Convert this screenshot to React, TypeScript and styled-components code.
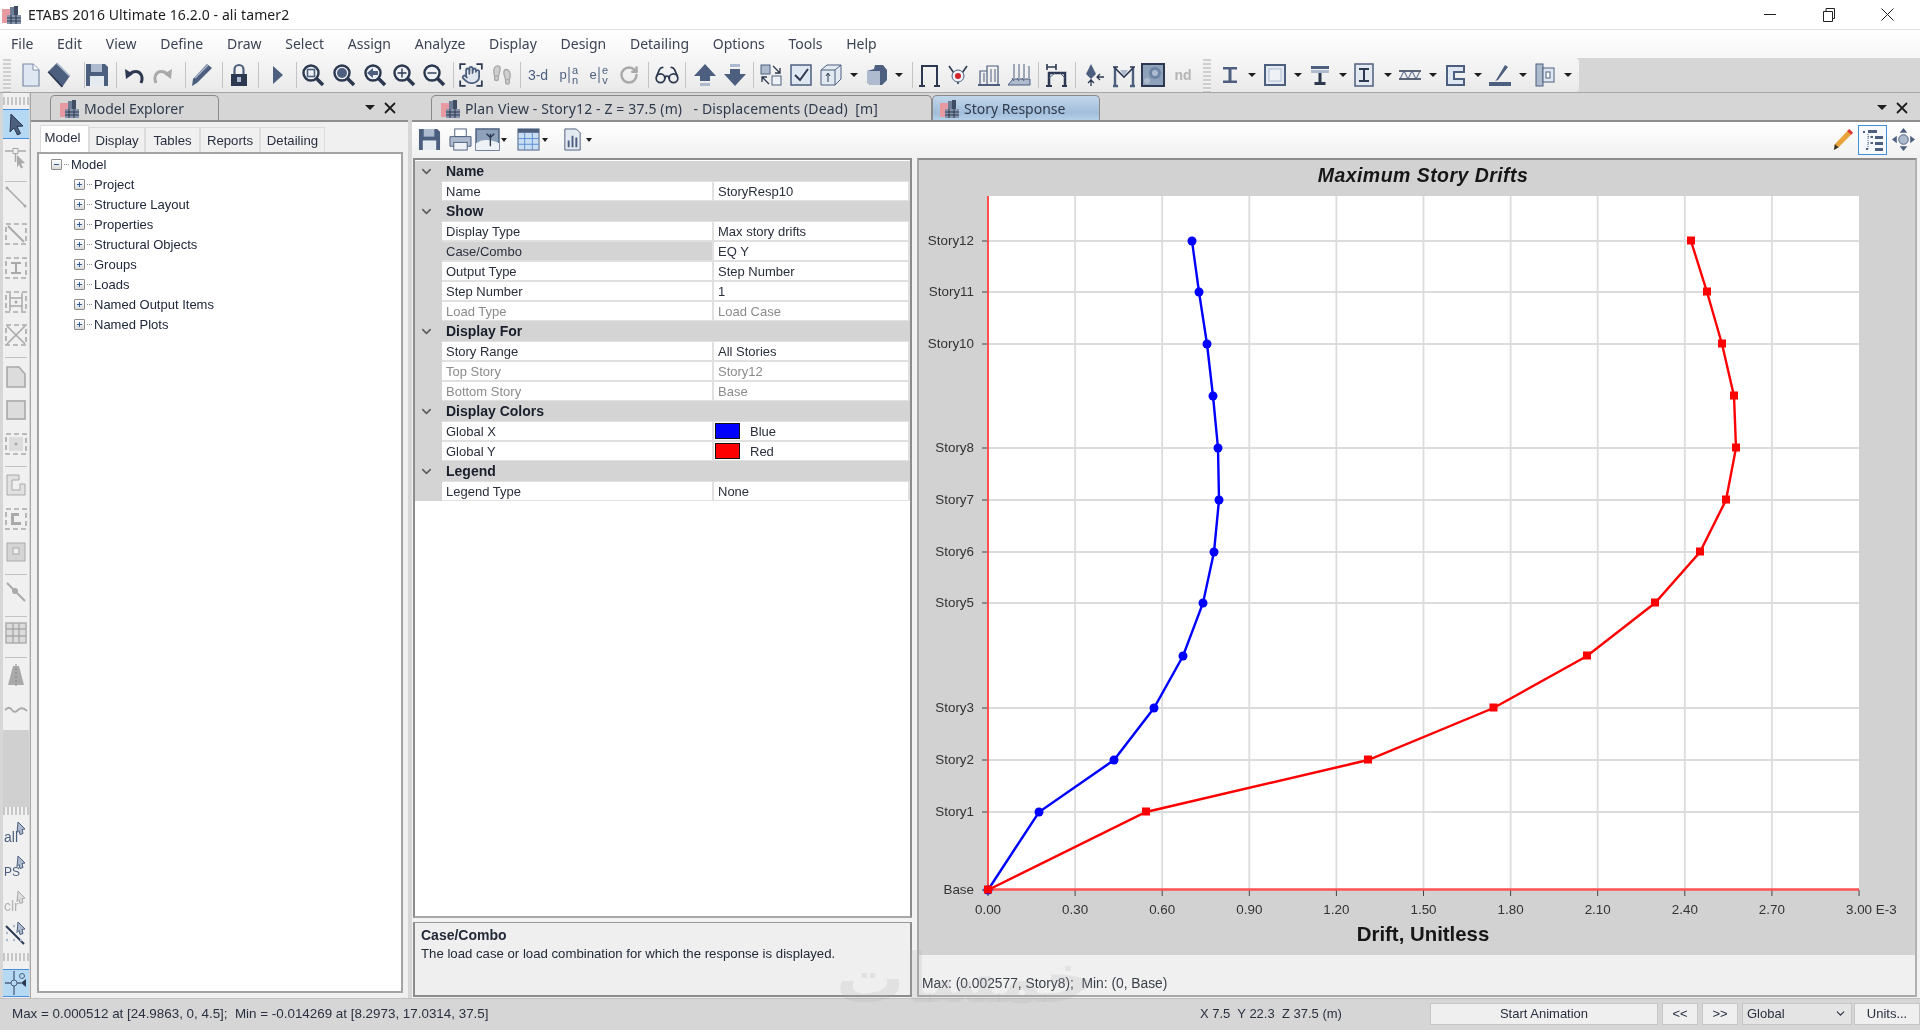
import React from "react"
import styled, { createGlobalStyle } from "styled-components"
import { ChevronDown, Footprints, Glasses, Hand, RotateCw } from "lucide-react"

const S = "#4d5f7f"
const D = "#2c3850"
const L = "#aebbcf"
const G = "#a9a9a9"
const GL = "#cfcfcf"

const GlobalStyle = createGlobalStyle`
	html, body {
		margin: 0;
		padding: 0;
		background: #d6d6d6;
	}
	* {
		box-sizing: border-box;
	}
`

// ---- toolbar / rail glyphs, all in a 24 box ----

const zoomRing = (inner: React.ReactNode) => (
	<>
		<circle cx="10" cy="10" r="7.5" fill="#eef2f7" stroke={D} strokeWidth="2.4" />
		<path d="M15.5 15.5 22 22" stroke={D} strokeWidth="3.6" />
		{inner}
	</>
)

const dashed = (inner: React.ReactNode) => (
	<>
		<rect x="2" y="2" width="20" height="20" fill="none" stroke={G} strokeWidth="1.6" strokeDasharray="5 3" />
		{inner}
	</>
)

const GLYPHS: Record<string, React.ReactNode> = {
	doc: <><path d="M5 1h10l6 6v16H5z" fill="#dfe7f2" stroke="#7d8ca6" strokeWidth="1.2" /><path d="M15 1v6h6" fill="#fff" stroke="#7d8ca6" /></>,
	book: <><path d="M2 9 10 1l12 12-7 10z" fill={S} /><path d="M10 1l12 12" stroke={L} strokeWidth="1.5" /><path d="M2 9l13 14" stroke={D} strokeWidth="1.5" /></>,
	save: <><path d="M1 1h19l3 3v19H1z" fill={S} /><rect x="6" y="1" width="11" height="8" fill={L} /><rect x="5" y="13" width="14" height="10" fill="#e6ebf2" /></>,
	undo: <><path d="M19 20c3-7-1-13-8-11l-4 2" fill="none" stroke={D} strokeWidth="3" /><path d="M3 6l1 10 7-5z" fill={D} /></>,
	redo: <><path d="M5 20C2 13 6 7 13 9l4 2" fill="none" stroke={G} strokeWidth="3" /><path d="M21 6l-1 10-7-5z" fill={G} /></>,
	pencil: <><path d="M3 23l1-7L18 1l5 4L8 20z" fill={S} /><path d="M6 15 19 2" stroke={L} strokeWidth="1.4" /></>,
	lock: <><rect x="4" y="11" width="16" height="12" fill={D} /><rect x="10" y="14" width="4" height="5" fill={L} /><path d="M7.5 11V6.5a4.5 4.5 0 0 1 9 0V11" fill="none" stroke={S} strokeWidth="2.2" /></>,
	play: <path d="M8 3l10 9-10 9z" fill={S} />,
	zoomBox: zoomRing(<rect x="6.5" y="6.5" width="7" height="7" fill="none" stroke={S} strokeWidth="1.6" />),
	zoomFull: zoomRing(<circle cx="10" cy="10" r="5" fill={S} />),
	zoomBack: zoomRing(<path d="M4 10l6-5v3h5v4h-5v3z" fill={S} />),
	zoomIn: zoomRing(<path d="M10 5.5v9M5.5 10h9" stroke={D} strokeWidth="1.4" />),
	zoomOut: zoomRing(<path d="M5.5 10h9" stroke={D} strokeWidth="1.4" />),
	hand: <><path d="M2 7V2h5M17 2h5v5M22 17v5h-5M7 22H2v-5" fill="none" stroke={D} strokeWidth="1.6" /><Hand x="3" y="3" width="18" height="18" color={S} fill="#dfe5ee" strokeWidth="2.2" /></>,
	foot: <Footprints x="1" y="1" width="22" height="22" color={G} fill={GL} strokeWidth="1.5" />,
	threeD: <text x="12" y="17" textAnchor="middle" fontSize="14" fill={S} fontFamily="'Liberation Sans', sans-serif">3-d</text>,
	plan: <><text x="6" y="16" textAnchor="middle" fontSize="13" fill={S} fontFamily="'Liberation Sans', sans-serif">p</text><path d="M12 4v16" stroke={S} /><text x="18" y="11" textAnchor="middle" fontSize="11" fill={S} fontFamily="'Liberation Sans', sans-serif">a</text><text x="18" y="21" textAnchor="middle" fontSize="11" fill={S} fontFamily="'Liberation Sans', sans-serif">n</text></>,
	elev: <><text x="6" y="16" textAnchor="middle" fontSize="13" fill={S} fontFamily="'Liberation Sans', sans-serif">e</text><path d="M12 4v16" stroke={S} /><text x="18" y="11" textAnchor="middle" fontSize="11" fill={S} fontFamily="'Liberation Sans', sans-serif">e</text><text x="18" y="21" textAnchor="middle" fontSize="11" fill={S} fontFamily="'Liberation Sans', sans-serif">v</text></>,
	rotate: <RotateCw x="2" y="2" width="20" height="20" color={G} strokeWidth="3" />,
	glasses: <Glasses x="0" y="0" width="24" height="24" color={D} strokeWidth="1.6" />,
	up: <><path d="M12 1 23 13h-6v5H7v-5H1z" fill={S} /><rect x="7" y="20" width="10" height="3" fill={L} /></>,
	down: <><rect x="7" y="1" width="10" height="3" fill={L} /><path d="M7 6h10v5h6L12 23 1 11h6z" fill={S} /></>,
	replicate: <><rect x="2" y="2" width="9" height="9" fill={L} stroke={S} /><rect x="13" y="13" width="9" height="9" fill="#eef2f7" stroke={S} /><path d="M14 3l7 7M21 5v5h-5M3 14l7 7M3 19v-5h5" fill="none" stroke={D} strokeWidth="1.3" /></>,
	check: <><rect x="2" y="2" width="20" height="20" fill="#dfe7f2" stroke={S} strokeWidth="1.5" /><path d="M6 12l5 5 8-11" fill="none" stroke={D} strokeWidth="2" /></>,
	box: <><path d="M2 7l6-5h14v14l-6 6H2z" fill="#e3e9f1" stroke={S} /><path d="M2 7h14v15M16 7l6-5" fill="none" stroke={S} /><path d="M9 19v-8M7 13l2-3 2 3" fill="none" stroke={D} /></>,
	shape: <><path d="M2 8l7-2 1-4h8l4 5v10l-5 5H5l-3-3z" fill={S} /><path d="M2 8h13v14H5l-3-3z" fill={L} /></>,
	frame: <path d="M5 23V3h15v20M2 23h6M17 23h6" fill="none" stroke={D} strokeWidth="2" />,
	node: <><path d="M3 3l7 10M21 3l-7 10M12 21v-3" fill="none" stroke={D} strokeWidth="1.6" /><circle cx="12" cy="13" r="6" fill="#eef2f7" stroke={S} /><circle cx="12" cy="13" r="3" fill="#d2232a" /></>,
	loadA: <><path d="M3 22V8h7v14M10 22V3h11v19" fill="none" stroke={S} strokeWidth="1.2" /><path d="M7 10v9M14 6v13M18 6v13" stroke={S} /><path d="M1 22h22" stroke={S} strokeWidth="2" /></>,
	loadB: <><path d="M7 1v14M12 1v14M17 1v14M22 3v12" stroke={S} /><path d="M1 22l5-6h17v6zM5 15l2 3M10 15l2 3M15 15l2 3" fill={L} stroke={S} /></>,
	portal: <><path d="M3 1v6M12 1v6M3 4h9" stroke={D} strokeWidth="1.6" /><path d="M5 23V10h16v13" fill="none" stroke={D} strokeWidth="2.5" /><path d="M2 23h6M18 23h5" stroke={D} strokeWidth="2" /><path d="M5 15l6-5M21 15l-5-5" stroke={S} /></>,
	cone: <><path d="M10 1l5 10-5 5-5-5z" fill={S} /><path d="M10 16v7M7 20l3-3 3 3M23 14h-7M19 11l-3 3 3 3" fill="none" stroke={D} strokeWidth="1.3" /></>,
	arch: <><path d="M3 4v19M21 4v19M1 23h5M18 23h5" stroke={S} strokeWidth="2.4" /><path d="M3 5l9 9 9-9M1 4h5M18 4h5" fill="none" stroke={D} strokeWidth="1.6" /><path d="M8 7h8l-4 6z" fill={L} /></>,
	contour: <><rect x="1" y="1" width="22" height="22" fill="#8ea1bb" stroke={D} strokeWidth="2" /><circle cx="14" cy="10" r="6" fill="#6d83a3" /><circle cx="14" cy="10" r="3" fill="#aebbcf" /><circle cx="6" cy="18" r="3" fill="#aebbcf" /></>,
	nd: <text x="12" y="17" textAnchor="middle" fontSize="14" fontWeight="700" fill="#b5b5b5" fontFamily="'Liberation Sans', sans-serif">nd</text>,
	ibeam: <path d="M5 4h14v2.5h-5.5v11H19V20H5v-2.500h5.500v-11H5z" fill={S} />,
	rectSec: <><rect x="2" y="2" width="20" height="20" fill="#e3e9f1" stroke={S} strokeWidth="2" /><rect x="6" y="6" width="12" height="12" fill="#eef2f7" stroke={L} /></>,
	tsec: <><rect x="3" y="3" width="18" height="3" fill={S} /><rect x="3" y="7" width="18" height="3" fill={L} /><path d="M10.500 10h3v9h4v3h-11v-3h4z" fill={D} /></>,
	iboxed: <><rect x="3" y="1" width="18" height="22" fill="#e3e9f1" stroke={S} strokeWidth="1.5" /><path d="M7 5h10v2h-4v10h4v2H7v-2h4V7H7z" fill={D} /></>,
	truss: <><path d="M1 8h22M1 16h22" stroke={D} strokeWidth="1.6" /><path d="M2 16l4-8 4 8 4-8 4 8 4-8" fill="none" stroke={S} /></>,
	csec: <path d="M4 3h17v6h-10v7h10v6H4z" fill="#dfe7f2" stroke={S} strokeWidth="2" />,
	weld: <><path d="M8 17 17 2l3 2-10 13-3 1z" fill={S} /><rect x="1" y="19" width="22" height="4" fill={S} /></>,
	column: <><rect x="3" y="1" width="7" height="22" fill={L} stroke={S} /><rect x="10" y="5" width="11" height="14" fill="#dfe7f2" stroke={S} /><rect x="13" y="9" width="4" height="6" fill="#fff" stroke={S} /></>,
	arrow: <path d="M7 2l12 12-6 .5 3.500 7-3 1.500-3.500-7L6 20z" fill={S} stroke={D} />,
	nodePick: <><path d="M1 5h8M14 5h8M11.500 8v8" stroke={G} strokeWidth="1.5" /><rect x="9" y="2.500" width="5" height="5" fill="none" stroke={G} /><path d="M13 9l8 8-4 .5 2 4-2 1-2-4-2 3z" fill={G} /></>,
	line: <><path d="M3 3l18 18" stroke={G} strokeWidth="1.6" /><circle cx="3" cy="3" r="1.500" fill={G} /><circle cx="21" cy="21" r="1.500" fill={G} /></>,
	dashLine: dashed(<path d="M4 4l16 16" stroke={G} strokeWidth="2" />),
	dashI: dashed(<path d="M7 6h10v2h-4v8h4v2H7v-2h4V8H7z" fill={G} />),
	dashGrid: dashed(<><path d="M6 3v18M18 3v18M6 8h12M6 16h12" stroke={G} strokeWidth="1.5" /><circle cx="12" cy="12" r="1.500" fill={G} /></>),
	dashX: dashed(<path d="M3 3l18 18M21 3 3 21" stroke={G} strokeWidth="1.6" />),
	poly: <path d="M3 2h12l6 7v13H3z" fill="#dcdcdc" stroke={G} strokeWidth="1.600" />,
	rect: <rect x="3" y="3" width="18" height="18" fill="#dcdcdc" stroke={G} strokeWidth="1.600" />,
	dashRect: dashed(<><rect x="5" y="5" width="14" height="14" fill="#dcdcdc" /><circle cx="12" cy="12" r="1.500" fill={G} /></>),
	lsec: <path d="M3 2h12v5H8v10h8v-6h5v11H3z" fill="#e0e0e0" stroke={G} />,
	dashL: dashed(<path d="M7 6h8v3h-5v6h7v3H7z" fill={G} />),
	squareDot: <><rect x="3" y="3" width="18" height="18" fill="#d4d4d4" stroke={G} /><rect x="9" y="8" width="6" height="6" fill="#eee" stroke={G} /></>,
	pin: <><path d="M3 3l18 18" stroke={G} strokeWidth="2" /><circle cx="11" cy="11" r="3" fill={G} /></>,
	grid: <><rect x="2" y="2" width="20" height="20" fill="#dcdcdc" stroke={G} strokeWidth="1.400" /><path d="M9 2v20M15 2v20M2 8h20M2 15h20" stroke={G} strokeWidth="1.400" /></>,
	trapezoid: <><path d="M9 3h6l5 19H4z" fill={G} /><path d="M12 1v22" stroke="#888" strokeDasharray="2 2" /></>,
	wave: <path d="M1 12c3-3 5-3 7 0s4 2 6 0 5-3 9 1" fill="none" stroke={G} strokeWidth="1.800" />,
	allPick: <><text x="0" y="21" fontSize="14" fill={S} fontFamily="'Liberation Sans', sans-serif">all</text><path d="M14 1l7 7-3 .5 1 4-3 1-1-4-2 2z" fill={L} stroke={S} /></>,
	psPick: <><text x="0" y="21" fontSize="12" fill={S} fontFamily="'Liberation Sans', sans-serif">PS</text><path d="M14 1l7 7-3 .5 1 4-3 1-1-4-2 2z" fill={L} stroke={S} /></>,
	clrPick: <><text x="0" y="21" fontSize="14" fill="#b3b3b3" fontFamily="'Liberation Sans', sans-serif">clr</text><path d="M14 1l7 7-3 .5 1 4-3 1-1-4-2 2z" fill="#ddd" stroke={G} /></>,
	slashPick: <><path d="M2 5l18 18" stroke={D} strokeWidth="2" /><path d="M2 12h2M2 19h2M9 19h2M16 19h2M9 5h2" stroke={L} strokeWidth="2.500" /><path d="M14 1l7 7-3 .5 1 4-3 1-1-4-2 2z" fill={L} stroke={S} /></>,
	nodeTool: <><path d="M10 0v9M10 15v9M1 12h6M13 12h4" stroke={S} strokeWidth="1.300" /><circle cx="10" cy="12" r="3" fill="none" stroke={S} /><circle cx="18" cy="5" r="2.500" fill="none" stroke={S} /><path d="M22 8v8l-5-4z" fill={D} /></>,
}

type Tool = { n: string; c: number; s?: number; h?: number; on?: boolean }

const TOP_TOOLS: Tool[] = [
	{ n: "grip", c: 7 }, { n: "doc", c: 30 }, { n: "book", c: 59, s: 26 }, { n: "sep", c: 84 }, { n: "save", c: 97 },
	{ n: "sep", c: 116 }, { n: "undo", c: 134 }, { n: "redo", c: 163 }, { n: "sep", c: 185 }, { n: "pencil", c: 201 },
	{ n: "sep", c: 222 }, { n: "lock", c: 239 }, { n: "sep", c: 258 }, { n: "play", c: 277 }, { n: "sep", c: 296 },
	{ n: "zoomBox", c: 313 }, { n: "zoomFull", c: 344 }, { n: "zoomBack", c: 375 }, { n: "zoomIn", c: 404 }, { n: "zoomOut", c: 434 },
	{ n: "sep", c: 453 }, { n: "hand", c: 471, s: 26 }, { n: "foot", c: 502 }, { n: "sep", c: 520 }, { n: "threeD", c: 538 },
	{ n: "plan", c: 569 }, { n: "elev", c: 599 }, { n: "rotate", c: 629 }, { n: "sep", c: 648 }, { n: "glasses", c: 667, s: 26 },
	{ n: "sep", c: 685 }, { n: "up", c: 704.5 }, { n: "down", c: 735 }, { n: "sep", c: 753 }, { n: "replicate", c: 771 },
	{ n: "check", c: 801 }, { n: "box", c: 831 }, { n: "caret", c: 854 }, { n: "shape", c: 877 }, { n: "caret", c: 899 },
	{ n: "sep", c: 912 }, { n: "frame", c: 929 }, { n: "node", c: 958 }, { n: "loadA", c: 989 }, { n: "loadB", c: 1019 },
	{ n: "sep", c: 1038 }, { n: "portal", c: 1056 }, { n: "sep", c: 1075 }, { n: "cone", c: 1093 }, { n: "arch", c: 1124 },
	{ n: "contour", c: 1153 }, { n: "nd", c: 1183 }, { n: "grip", c: 1207 }, { n: "ibeam", c: 1230 }, { n: "caret", c: 1252 },
	{ n: "rectSec", c: 1275 }, { n: "caret", c: 1298 }, { n: "tsec", c: 1320 }, { n: "caret", c: 1343 }, { n: "iboxed", c: 1364 },
	{ n: "caret", c: 1388 }, { n: "truss", c: 1410 }, { n: "caret", c: 1433 }, { n: "csec", c: 1455 }, { n: "caret", c: 1478 },
	{ n: "weld", c: 1500 }, { n: "caret", c: 1523 }, { n: "column", c: 1545 }, { n: "caret", c: 1568 },
]

// rail offsets are measured from the top of the main area
const RAIL_A: Tool[] = [
	{ n: "arrow", c: 31, s: 30, on: true }, { n: "nodePick", c: 65 }, { n: "railSep", c: 88 }, { n: "line", c: 104 },
	{ n: "dashLine", c: 141 }, { n: "dashI", c: 175 }, { n: "dashGrid", c: 209 }, { n: "dashX", c: 242 },
	{ n: "railSep", c: 264 }, { n: "poly", c: 284 }, { n: "rect", c: 317 }, { n: "dashRect", c: 351 }, { n: "railSep", c: 373 },
	{ n: "lsec", c: 392 }, { n: "dashL", c: 426 }, { n: "squareDot", c: 459 }, { n: "railSep", c: 481 }, { n: "pin", c: 499 },
	{ n: "railSep", c: 523 }, { n: "grid", c: 540 }, { n: "railSep", c: 564 }, { n: "trapezoid", c: 582 }, { n: "wave", c: 617 },
]

const RAIL_B: Tool[] = [
	{ n: "allPick", c: 26 }, { n: "psPick", c: 60 }, { n: "clrPick", c: 95 }, { n: "slashPick", c: 126 },
	{ n: "railGrip", c: 150 }, { n: "nodeTool", c: 176, s: 28, on: true },
]

const withGaps = (items: Tool[], start: number) => {
	let end = start
	return items.map((t) => {
		const s = t.n === "sep" || t.n === "railSep" ? 1 : t.n === "caret" ? 8 : t.n === "grip" ? 8 : t.n === "railGrip" ? 8 : (t.s ?? 24)
		const gap = t.c - s / 2 - end
		end = t.c + s / 2
		return { ...t, s, gap }
	})
}

// ---- page ----

const Page = styled.div`
	position: relative;
	width: 1920px;
	height: 1030px;
	overflow: hidden;
	display: flex;
	flex-direction: column;
	background: #d6d6d6;
	font-family: "Liberation Sans", Arial, sans-serif;
	font-size: 13px;
	color: #26262e;
	filter: blur(0.35px);
`

const TitleBar = styled.header`
	height: 30px;
	flex: none;
	display: flex;
	align-items: center;
	background: #fff;
	border-bottom: 1px solid #e0e0e0;
	padding: 0 3px 0 2px;
	font-family: "Noto Sans", sans-serif;
	font-size: 14px;
	color: #1c1c1c;
`

const TitleText = styled.span`
	margin-left: 6px;
	flex: 1;
	padding-bottom: 1px;
	letter-spacing: 0.1px;
`

const WinButton = styled.div`
	width: 59px;
	height: 29px;
	display: flex;
	align-items: center;
	justify-content: center;
`

const Menu = styled.nav`
	height: 28px;
	flex: none;
	display: flex;
	align-items: center;
	gap: 23.7px;
	padding: 0 0 2px 11px;
	background: linear-gradient(#ffffff, #f6f6f6);
	font-family: "Noto Sans", sans-serif;
	font-size: 14px;
	color: #3c4454;
`

const ToolRow = styled.div`
	height: 35px;
	flex: none;
	background: #d6d6d6;
	border-bottom: 1px solid #a6a6a6;
	display: flex;
`

const ToolBand = styled.div`
	width: 1579px;
	display: flex;
	align-items: center;
	background: linear-gradient(#f6f6f6, #efefef 60%, #e9e9e9);
	border-radius: 0 4px 4px 0;
`

const ToolSlot = styled.svg<{ $w: number; $gap: number }>`
	flex: none;
	width: ${(p) => p.$w}px;
	height: ${(p) => p.$w}px;
	margin-left: ${(p) => p.$gap}px;
	overflow: visible;
`

const Sep = styled.i<{ $gap: number }>`
	flex: none;
	width: 1px;
	height: 26px;
	margin-left: ${(p) => p.$gap}px;
	background: #c4c4c4;
`

const Caret = styled.i<{ $gap: number }>`
	flex: none;
	margin-left: ${(p) => p.$gap}px;
	border-left: 4px solid transparent;
	border-right: 4px solid transparent;
	border-top: 4px solid #1e1e1e;
`

const Grip = styled.i<{ $gap: number }>`
	flex: none;
	width: 8px;
	height: 33px;
	margin-left: ${(p) => p.$gap}px;
	background: repeating-linear-gradient(#c6c6c6 0 2px, #f0f0f0 2px 4px);
	opacity: 0.8;
`

const Main = styled.div`
	flex: 1;
	min-height: 0;
	display: flex;
`

const Rail = styled.aside`
	width: 31px;
	flex: none;
	display: flex;
	flex-direction: column;
	padding-left: 3px;
	border-right: 1px solid #a8a8a8;
	background: #d6d6d6;
`

const RailBlock = styled.div<{ $h: number }>`
	flex: none;
	width: 26px;
	height: ${(p) => p.$h}px;
	display: flex;
	flex-direction: column;
	align-items: center;
	background: #f0f0f0;
`

const RailGap = styled.div`
	flex: 1;
	width: 26px;
	background: #d0d0d0;
`

const RailSlot = styled.div<{ $h: number; $gap: number; $on?: boolean }>`
	flex: none;
	width: 26px;
	height: ${(p) => p.$h}px;
	margin-top: ${(p) => p.$gap}px;
	display: flex;
	align-items: center;
	justify-content: center;
	background: ${(p) => (p.$on ? "#b5d8f3" : "transparent")};
	border-top: ${(p) => (p.$on ? "1px solid #4a90d9" : "none")};
	border-bottom: ${(p) => (p.$on ? "1px solid #4a90d9" : "none")};

	svg {
		width: 24px;
		height: 24px;
		overflow: visible;
	}
`

const RailSep = styled.i<{ $gap: number }>`
	flex: none;
	width: 22px;
	height: 1px;
	margin-top: ${(p) => p.$gap}px;
	background: #c2c2c2;
`

const RailGrip = styled.i<{ $gap: number }>`
	flex: none;
	width: 26px;
	height: 8px;
	margin-top: ${(p) => p.$gap}px;
	background: repeating-linear-gradient(90deg, #c6c6c6 0 2px, #f2f2f2 2px 4px);
`

const LeftDock = styled.section`
	width: 377px;
	flex: none;
	display: flex;
	flex-direction: column;
	background: #f0f0f0;
`

const Strip = styled.div`
	height: 29px;
	flex: none;
	display: flex;
	align-items: flex-end;
	background: #d6d6d6;
	border-bottom: 2px solid #8e8e8e;
	font-family: "Noto Sans", sans-serif;
	font-size: 14px;
	color: #2f3a4c;
`

const ExplorerStrip = styled(Strip)`
	padding-left: 19px;
`

const DocTab = styled.div<{ $w: number; $active?: boolean }>`
	width: ${(p) => p.$w}px;
	height: 25px;
	flex: none;
	display: flex;
	align-items: center;
	gap: 4px;
	padding: 1px 0 0 ${(p) => (p.$active ? 7 : 9)}px;
	white-space: pre;
	border: 1px solid #8a8a8a;
	border-bottom: none;
	border-radius: 5px 5px 0 0;
	background: ${(p) => (p.$active ? "linear-gradient(#c2d6ea, #a2bedb 70%, #b6cfe8)" : "#d6d6d6")};
`

const WideTabText = styled.span`
	letter-spacing: 0.13px;
`

const StripSpacer = styled.div`
	flex: 1;
`

const StripCaret = styled.i`
	align-self: center;
	border-left: 5px solid transparent;
	border-right: 5px solid transparent;
	border-top: 5px solid #1e1e1e;
	margin-right: 9px;
	margin-top: 2px;
`

const StripClose = styled.svg`
	align-self: center;
	width: 12px;
	height: 12px;
	margin-right: 12px;
	margin-top: 2px;
`

const SubTabs = styled.div`
	height: 30px;
	flex: none;
	display: flex;
	align-items: flex-end;
	padding-left: 9px;
`

const SubTab = styled.div<{ $w: number; $active?: boolean }>`
	width: ${(p) => p.$w}px;
	height: ${(p) => (p.$active ? 27 : 25)}px;
	flex: none;
	display: flex;
	align-items: center;
	justify-content: center;
	padding: 0 ${(p) => (p.$active ? 4 : 0)}px ${(p) => (p.$active ? 4 : 0)}px 0;
	background: ${(p) => (p.$active ? "#fff" : "#f0f0f0")};
	border: 1px solid #dcdcdc;
	border-bottom: none;
	font-size: 13.2px;
	color: #2a3040;
`

const TreeBox = styled.div`
	height: 841px;
	margin: 0 5px 0 6px;
	flex: none;
	background: #fff;
	border: 2px solid #a4a4a4;
`

const TreeRow = styled.div<{ $child?: boolean }>`
	height: 20px;
	display: flex;
	align-items: center;
	padding-left: ${(p) => (p.$child ? 35 : 12)}px;
	font-size: 13px;
	color: #20283a;
`

const Expander = styled.span<{ $open?: boolean }>`
	position: relative;
	width: 11px;
	height: 11px;
	flex: none;
	border: 1px solid #8f8f8f;
	border-radius: 1px;
	background: linear-gradient(#fff, #d8d8d8);

	&::before {
		content: "";
		position: absolute;
		left: 2px;
		top: 4px;
		width: 5px;
		height: 1px;
		background: #2f5f9a;
	}

	&::after {
		content: "";
		display: ${(p) => (p.$open ? "none" : "block")};
		position: absolute;
		left: 4px;
		top: 2px;
		width: 1px;
		height: 5px;
		background: #2f5f9a;
	}
`

const TreeStem = styled.i`
	width: 5px;
	flex: none;
	margin: 0 2px 0 2px;
	border-top: 1px dotted #8a8a8a;
`

const CenterDock = styled.section`
	flex: 1;
	min-width: 0;
	margin-left: 4px;
	display: flex;
	flex-direction: column;
	background: #f2f2f2;
`

const CenterStrip = styled(Strip)`
	padding-left: 19px;
`

const TabIcon = styled.svg`
	width: 20px;
	height: 20px;
	flex: none;
`

const ViewBar = styled.div`
	height: 35px;
	flex: none;
	display: flex;
	align-items: center;
	padding-left: 6px;
	background: linear-gradient(#fff, #f1f1f1);
`

const ViewTool = styled.svg<{ $gap?: number; $end?: number }>`
	width: 23px;
	height: 23px;
	flex: none;
	margin-left: ${(p) => p.$gap ?? 0}px;
	margin-right: ${(p) => p.$end ?? 0}px;
	overflow: visible;
`

const ViewCaret = styled.i<{ $gap?: number }>`
	flex: none;
	margin-left: ${(p) => p.$gap ?? 2}px;
	border-left: 3px solid transparent;
	border-right: 3px solid transparent;
	border-top: 4px solid #1e1e1e;
`

const ViewSelected = styled.div`
	width: 29px;
	height: 30px;
	flex: none;
	margin-left: 4px;
	display: flex;
	align-items: center;
	justify-content: center;
	border: 1px solid #3f8fdc;
	background: #f6fafe;
`

const Panes = styled.div`
	flex: 1;
	min-height: 0;
	display: flex;
	padding: 1px 3px 1px 1px;
	gap: 5px;
`

const LeftPane = styled.div`
	width: 499px;
	flex: none;
	display: flex;
	flex-direction: column;
	gap: 4px;
`

const Grid = styled.div`
	flex: 1;
	min-height: 0;
	background: #fff;
	border: 2px solid #8c8c8c;
	border-bottom-color: #a8a8a8;
	padding-top: 1px;
`

const GridHead = styled.div`
	height: 20px;
	display: flex;
	align-items: center;
	background: #d4d4d4;
	font-size: 14px;
	font-weight: 700;
	color: #1a1f2c;
`

const Gutter = styled.div`
	width: 27px;
	height: 100%;
	flex: none;
	display: flex;
	align-items: center;
	padding-left: 4px;
	color: #5a5a5a;
	background: #d4d4d4;
`

const HeadLabel = styled.span`
	margin-left: 4px;
`

const GridRow = styled.div`
	height: 20px;
	display: flex;
	background: #e0e0e0;
`

const LabelCell = styled.div<{ $selected?: boolean; $muted?: boolean }>`
	width: 270px;
	height: 18px;
	margin-top: 1px;
	flex: none;
	padding-left: 4px;
	line-height: 19px;
	background: ${(p) => (p.$selected ? "#d4d4d4" : "#fff")};
	color: ${(p) => (p.$muted ? "#8b8b8b" : "#2a2f3c")};
`

const ValueCell = styled.div<{ $muted?: boolean }>`
	flex: 1;
	height: 18px;
	margin: 1px 2px 0 2px;
	display: flex;
	align-items: center;
	padding-left: 4px;
	background: #fff;
	color: ${(p) => (p.$muted ? "#8b8b8b" : "#2a2f3c")};
`

const Swatch = styled.i<{ $color: string }>`
	width: 25px;
	height: 16px;
	flex: none;
	margin: 0 10px 0 -3px;
	background: ${(p) => p.$color};
	border: 1px solid #111;
`

const Description = styled.div`
	height: 75px;
	flex: none;
	padding: 3px 6px;
	background: #efefef;
	border-top: 1px solid #9a9a9a;
	border-left: 2px solid #8c8c8c;
	border-right: 2px solid #8c8c8c;
	border-bottom: 2px solid #8c8c8c;
	font-size: 13.2px;
	color: #222a38;

	b {
		display: block;
		font-size: 14px;
		line-height: 18px;
		margin-bottom: 2px;
	}
`

const ChartPane = styled.div`
	flex: 1;
	min-width: 0;
	display: flex;
	flex-direction: column;
	border-top: 2px solid #8c8c8c;
	border-left: 2px solid #a8a8a8;
	border-right: 2px solid #b0b0b0;
	border-bottom: 2px solid #a8a8a8;
	background: #d2d2d2;
`

const ChartSvg = styled.svg`
	display: block;
	flex: none;
	width: 996px;
	height: 795px;
`

const ChartFoot = styled.div`
	flex: 1;
	display: flex;
	align-items: flex-end;
	padding: 0 0 4px 3px;
	background: #f0f0f0;
	color: #3a3f4a;
	font-size: 13.8px;
	white-space: pre;
`

const Status = styled.footer`
	height: 32px;
	flex: none;
	display: flex;
	align-items: center;
	padding: 0 0 2px 12px;
	background: #d6d6d6;
	border-top: 1px solid #c0c0c0;
	font-size: 13px;
	color: #2a3040;
	white-space: pre;
`

const StatusText = styled.div<{ $w: number; $size?: number }>`
	width: ${(p) => p.$w}px;
	flex: none;
	font-size: ${(p) => p.$size ?? 13}px;
`

const StatusButton = styled.div<{ $w: number }>`
	width: ${(p) => p.$w}px;
	height: 22px;
	flex: none;
	margin-right: 4px;
	display: flex;
	align-items: center;
	justify-content: center;
	background: #efefef;
	border: 1px solid #c6c6c6;
	font-size: 13px;
`

const StatusSelect = styled(StatusButton)`
	justify-content: space-between;
	padding: 0 4px;
	margin-right: 2px;
	background: #e4e4e4;
`

const Watermark = styled.div`
	position: absolute;
	left: 836px;
	top: 934px;
	font-family: "DejaVu Sans", sans-serif;
	font-weight: 700;
	font-size: 68px;
	line-height: 90px;
	color: rgba(170, 170, 170, 0.2);
	pointer-events: none;
`

const AppMark = () => (
	<TabIcon viewBox="0 0 20 20">
		<rect x="0" y="4" width="8" height="14" fill="#e79aa2" />
		<rect x="8" y="2" width="4" height="16" fill="#6d7d96" />
		<rect x="12" y="1" width="4" height="17" fill="#3f4c63" />
		<rect x="5" y="10" width="14" height="9" fill="#8695ac" />
		<path d="M5 13h14M5 16h14M9 10v9M14 10v9" stroke="#2c3850" strokeWidth="1" />
	</TabIcon>
)

// ---- chart data, pixel positions measured off the plot ----

const STORIES: { label?: string; y: number; blue: number; red: number }[] = [
	{ label: "Story12", y: 241, blue: 1192, red: 1691 },
	{ label: "Story11", y: 292, blue: 1199, red: 1707 },
	{ label: "Story10", y: 344, blue: 1207, red: 1722 },
	{ y: 396, blue: 1213, red: 1734 },
	{ label: "Story8", y: 448, blue: 1218, red: 1736 },
	{ label: "Story7", y: 500, blue: 1219, red: 1726 },
	{ label: "Story6", y: 552, blue: 1214, red: 1700 },
	{ label: "Story5", y: 603, blue: 1203, red: 1655 },
	{ y: 656, blue: 1183, red: 1587 },
	{ label: "Story3", y: 708, blue: 1154, red: 1493.5 },
	{ label: "Story2", y: 760, blue: 1114, red: 1368 },
	{ label: "Story1", y: 812, blue: 1039, red: 1146 },
	{ label: "Base", y: 890, blue: 988, red: 988 },
]

const X_LEFT = 988
const X_RIGHT = 1859
const X_LABELS = ["0.00", "0.30", "0.60", "0.90", "1.20", "1.50", "1.80", "2.10", "2.40", "2.70"]
const xAt = (i: number) => X_LEFT + (i * (X_RIGHT - X_LEFT)) / 10

const Chart = () => (
	<ChartSvg viewBox="919 160 996 795" fontFamily="'Liberation Sans', Arial, sans-serif">
		<text x="1423" y="182" textAnchor="middle" fontSize="19.500" fontWeight="700" fontStyle="italic" fill="#161616" letterSpacing="0.45">Maximum Story Drifts</text>
		<rect x={X_LEFT} y="196" width={X_RIGHT - X_LEFT} height="694" fill="#fff" />
		{X_LABELS.map((_, i) => i > 0 && <path key={i} d={`M${xAt(i)} 196V890`} stroke="#dcdcdc" strokeWidth="1.800" />)}
		{STORIES.filter((s) => s.label).map((s) => (
			<g key={s.y}>
				<path d={`M${X_LEFT} ${s.y}H${X_RIGHT}`} stroke="#dcdcdc" strokeWidth="1.800" />
				<path d={`M982 ${s.y}H${X_LEFT}`} stroke="#444" />
				<text x="974" y={s.y + 3.5} textAnchor="end" fontSize="13.400" fill="#333">{s.label}</text>
			</g>
		))}
		{X_LABELS.map((l, i) => (
			<g key={l}>
				<path d={`M${xAt(i)} 890v6`} stroke="#444" />
				<text x={xAt(i)} y="914" textAnchor="middle" fontSize="13.400" fill="#333">{l}</text>
			</g>
		))}
		<path d={`M${X_RIGHT} 890v6`} stroke="#444" />
		<text x={X_RIGHT - 13} y="914" fontSize="13.400" fill="#333">3.00 E-3</text>
		<path d={`M${X_LEFT} 196V890`} stroke="#ff5050" strokeWidth="2" />
		<path d={`M${X_LEFT} 889.500H${X_RIGHT}`} stroke="#ff5050" strokeWidth="2.500" />
		<polyline points={STORIES.map((s) => `${s.blue},${s.y}`).join(" ")} fill="none" stroke="#0000ff" strokeWidth="2.400" />
		{STORIES.map((s) => <circle key={s.y} cx={s.blue} cy={s.y} r="4.500" fill="#0000ff" />)}
		<polyline points={STORIES.map((s) => `${s.red},${s.y}`).join(" ")} fill="none" stroke="#ff0000" strokeWidth="2.400" />
		{STORIES.map((s) => <rect key={s.y} x={s.red - 4} y={s.y - 4.5} width="8" height="8" fill="#ff0000" />)}
		<text x="1423" y="941" textAnchor="middle" fontSize="20.400" fontWeight="700" fill="#161616">Drift, Unitless</text>
	</ChartSvg>
)

type Row =
	| { head: string }
	| { label: string; value: string; muted?: boolean; selected?: boolean; swatch?: string }

const ROWS: Row[] = [
	{ head: "Name" },
	{ label: "Name", value: "StoryResp10" },
	{ head: "Show" },
	{ label: "Display Type", value: "Max story drifts" },
	{ label: "Case/Combo", value: "EQ Y", selected: true },
	{ label: "Output Type", value: "Step Number" },
	{ label: "Step Number", value: "1" },
	{ label: "Load Type", value: "Load Case", muted: true },
	{ head: "Display For" },
	{ label: "Story Range", value: "All Stories" },
	{ label: "Top Story", value: "Story12", muted: true },
	{ label: "Bottom Story", value: "Base", muted: true },
	{ head: "Display Colors" },
	{ label: "Global X", value: "Blue", swatch: "#0000ff" },
	{ label: "Global Y", value: "Red", swatch: "#ff0000" },
	{ head: "Legend" },
	{ label: "Legend Type", value: "None" },
]

const MENU = ["File", "Edit", "View", "Define", "Draw", "Select", "Assign", "Analyze", "Display", "Design", "Detailing", "Options", "Tools", "Help"]
const TREE = ["Project", "Structure Layout", "Properties", "Structural Objects", "Groups", "Loads", "Named Output Items", "Named Plots"]

const CloseMark = () => (
	<StripClose viewBox="0 0 12 12">
		<path d="M1 1l10 10M11 1 1 11" stroke="#1e1e1e" strokeWidth="1.800" />
	</StripClose>
)

const App = () => {
	return (
		<Page>
			<GlobalStyle />

			<TitleBar>
				<AppMark />
				<TitleText>ETABS 2016 Ultimate 16.2.0 - ali tamer2</TitleText>
				<WinButton>
					<svg width="12" height="12"><path d="M0 5.500h12" stroke="#222" /></svg>
				</WinButton>
				<WinButton>
					<svg width="12" height="14"><path d="M.5 3.500h9v10h-9zM3 3.500V.5h8.500v10H9.500" fill="none" stroke="#222" /></svg>
				</WinButton>
				<WinButton>
					<svg width="13" height="13"><path d="M.5.5l12 12M12.500.5l-12 12" stroke="#222" /></svg>
				</WinButton>
			</TitleBar>

			<Menu>
				{MENU.map((m) => <span key={m}>{m}</span>)}
			</Menu>

			<ToolRow>
				<ToolBand>
					{withGaps(TOP_TOOLS, 0).map((t, i) => {
						if (t.n === "sep") return <Sep key={i} $gap={t.gap} />
						if (t.n === "caret") return <Caret key={i} $gap={t.gap} />
						if (t.n === "grip") return <Grip key={i} $gap={t.gap} />
						return <ToolSlot key={i} viewBox="0 0 24 24" $w={t.s} $gap={t.gap}>{GLYPHS[t.n]}</ToolSlot>
					})}
				</ToolBand>
			</ToolRow>

			<Main>
				<Rail>
					<RailBlock $h={637}>
						<RailGrip $gap={4} />
						{withGaps(RAIL_A, 12).map((t, i) =>
							t.n === "railSep"
								? <RailSep key={i} $gap={t.gap} />
								: <RailSlot key={i} $h={t.s} $gap={t.gap} $on={t.on}><svg viewBox="0 0 24 24">{GLYPHS[t.n]}</svg></RailSlot>
						)}
					</RailBlock>
					<RailGap />
					<RailBlock $h={191}>
						<RailGrip $gap={0} />
						{withGaps(RAIL_B, 8).map((t, i) =>
							t.n === "railGrip"
								? <RailGrip key={i} $gap={t.gap} />
								: <RailSlot key={i} $h={t.s} $gap={t.gap} $on={t.on}><svg viewBox="0 0 24 24">{GLYPHS[t.n]}</svg></RailSlot>
						)}
					</RailBlock>
				</Rail>

				<LeftDock>
					<ExplorerStrip>
						<DocTab $w={169}>
							<AppMark />
							Model Explorer
						</DocTab>
						<StripSpacer />
						<StripCaret />
						<CloseMark />
					</ExplorerStrip>
					<SubTabs>
						<SubTab $w={49} $active>Model</SubTab>
						<SubTab $w={56}>Display</SubTab>
						<SubTab $w={55}>Tables</SubTab>
						<SubTab $w={60}>Reports</SubTab>
						<SubTab $w={65}>Detailing</SubTab>
					</SubTabs>
					<TreeBox>
						<TreeRow>
							<Expander $open />
							<TreeStem />
							Model
						</TreeRow>
						{TREE.map((t) => (
							<TreeRow key={t} $child>
								<Expander />
								<TreeStem />
								{t}
							</TreeRow>
						))}
					</TreeBox>
				</LeftDock>

				<CenterDock>
					<CenterStrip>
						<DocTab $w={501}>
							<AppMark />
							<WideTabText>{"Plan View - Story12 - Z = 37.5 (m)   - Displacements (Dead)  [m]"}</WideTabText>
						</DocTab>
						<DocTab $w={168} $active>
							<AppMark />
							Story Response
						</DocTab>
						<StripSpacer />
						<StripCaret />
						<CloseMark />
					</CenterStrip>

					<ViewBar>
						<ViewTool viewBox="0 0 24 24">{GLYPHS.save}</ViewTool>
						<ViewTool viewBox="0 0 24 24" $gap={8}>
							<rect x="6" y="1" width="12" height="8" fill="#fff" stroke={S} />
							<path d="M1 9h22v10H1z" fill={L} stroke={S} />
							<rect x="5" y="15" width="14" height="8" fill="#eef2f7" stroke={S} />
						</ViewTool>
						<ViewTool viewBox="0 0 24 24" $gap={4}>
							<rect x="0" y="1" width="24" height="22" fill="#8ea1bb" stroke={S} strokeWidth="1.500" />
							<path d="M0 16c6-4 14-5 24 0v7H0z" fill="#eef2f7" />
							<path d="M15 6v13M15 10l-4-4M15 10l4-4" stroke={D} strokeWidth="1.400" />
						</ViewTool>
						<ViewCaret />
						<ViewTool viewBox="0 0 24 24" $gap={10}>
							<rect x="1" y="1" width="22" height="22" fill="#c9ddf3" stroke={S} />
							<rect x="1" y="1" width="22" height="4" fill={S} />
							<path d="M8 5v18M16 5v18M1 11h22M1 17h22" stroke="#5b8fd0" />
						</ViewTool>
						<ViewCaret />
						<ViewTool viewBox="0 0 24 24" $gap={13}>
							<path d="M4 1h12l4 4v18H4z" fill="#e3e9f1" stroke={S} />
							<path d="M8 20v-7M12 20V8M16 20v-10" stroke={S} strokeWidth="2" />
						</ViewTool>
						<ViewCaret />
						<StripSpacer />
						<ViewTool viewBox="0 0 24 24">
							<path d="M3 23l1-6L18 2l4 4L8 20z" fill="#e8a33c" />
							<path d="M3 23l1-6 4 3z" fill="#333" />
							<path d="M18 2l4 4" stroke="#d33" strokeWidth="3" />
						</ViewTool>
						<ViewSelected>
							<svg width="22" height="24" viewBox="0 0 22 24">
								<path d="M1 3h2v2H1zM6 2h9v3H6zM9 8h2v2H9zM13 8h8v3h-8zM9 14h2v2H9zM13 14h8v3h-8zM4 20h2v2H4zM13 20h8v3h-8z" fill={S} />
								<path d="M6 6v16M6 9h3M6 15h3" stroke={S} strokeDasharray="1 1" fill="none" />
							</svg>
						</ViewSelected>
						<ViewTool viewBox="0 0 24 24" $gap={5} $end={5}>
							<path d="M12 0l4 5h-8zM12 24l-4-5h8zM0 12l5-4v8zM24 12l-5 4V8z" fill={S} />
							<circle cx="12" cy="12" r="5" fill={L} stroke={S} />
						</ViewTool>
					</ViewBar>

					<Panes>
						<LeftPane>
							<Grid>
								{ROWS.map((r, i) =>
									"head" in r ? (
										<GridHead key={i}>
											<Gutter><ChevronDown size={15} strokeWidth={2.4} /></Gutter>
											<HeadLabel>{r.head}</HeadLabel>
										</GridHead>
									) : (
										<GridRow key={i}>
											<Gutter />
											<LabelCell $selected={r.selected} $muted={r.muted}>{r.label}</LabelCell>
											<ValueCell $muted={r.muted}>
												{r.swatch && <Swatch $color={r.swatch} />}
												{r.value}
											</ValueCell>
										</GridRow>
									)
								)}
							</Grid>
							<Description>
								<b>Case/Combo</b>
								The load case or load combination for which the response is displayed.
							</Description>
						</LeftPane>

						<ChartPane>
							<Chart />
							<ChartFoot>{"Max: (0.002577, Story8);  Min: (0, Base)"}</ChartFoot>
						</ChartPane>
					</Panes>
				</CenterDock>
			</Main>

			<Status>
				<StatusText $w={1188} $size={13.4}>{"Max = 0.000512 at [24.9863, 0, 4.5];  Min = -0.014269 at [8.2973, 17.0314, 37.5]"}</StatusText>
				<StatusText $w={230}>{"X 7.5  Y 22.3  Z 37.5 (m)"}</StatusText>
				<StatusButton $w={228}>Start Animation</StatusButton>
				<StatusButton $w={36}>{"<<"}</StatusButton>
				<StatusButton $w={36}>{">>"}</StatusButton>
				<StatusSelect $w={110}>Global<ChevronDown size={13} /></StatusSelect>
				<StatusButton $w={66}>Units...</StatusButton>
			</Status>

			<Watermark>خمسات</Watermark>
		</Page>
	)
}

export default App
